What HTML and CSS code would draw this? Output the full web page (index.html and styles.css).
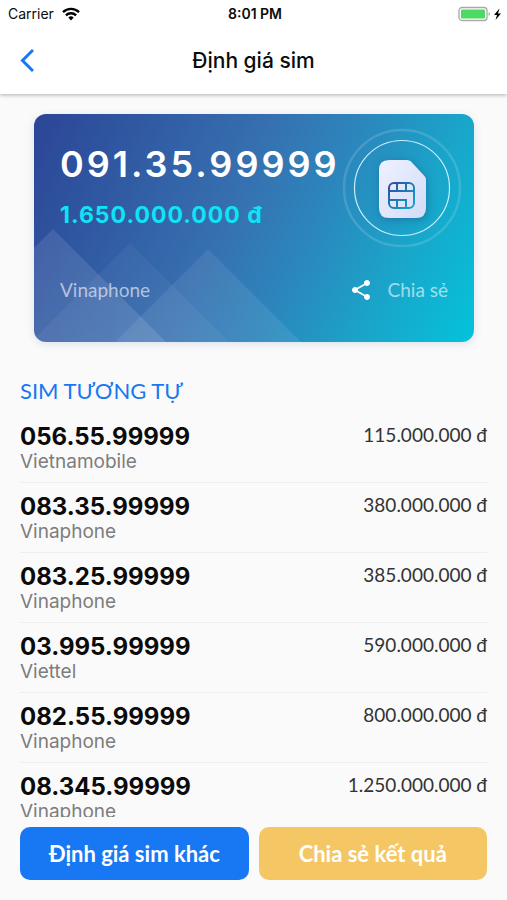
FILE: index.html
```html
<!DOCTYPE html>
<html lang="vi">
<head>
  <meta charset="UTF-8" />
  <meta name="viewport" content="width=device-width, initial-scale=1.0" />
  <title>Định giá sim</title>
  <link rel="stylesheet" href="styles.css">
</head>
<body>

<header class="header">
  <div class="status-bar">
    <div class="status-left">
      <span>Carrier</span>
      <svg width="18" height="14" viewBox="0 0 18 14" fill="none" stroke="#000" stroke-width="2.4">
        <path d="M1 5.2a11.3 11.3 0 0 1 16 0" />
        <path d="M3.9 8.3a7.2 7.2 0 0 1 10.2 0" />
        <path d="M9 13.4l-2.7-2.8a3.8 3.8 0 0 1 5.4 0z" fill="#000" stroke="none" />
      </svg>
    </div>
    <span class="status-time">8:01 PM</span>
    <div class="status-right">
      <svg width="44" height="16" viewBox="0 0 44 16">
        <rect x="1" y="1.5" width="28" height="13" rx="3" fill="#fff" stroke="#a9a9a9" stroke-width="1.3" />
        <rect x="3" y="3.5" width="24" height="9" rx="1" fill="#4cd964" />
        <path d="M30.6 6v4q1.4-.6 1.4-2t-1.4-2z" fill="#a9a9a9" />
        <path d="M41.5 2.5l-5.5 6.5h3l-1.5 5 5.5-6.5h-3z" fill="#000" />
      </svg>
    </div>
  </div>
  <nav class="nav-bar">
    <button class="back-button" aria-label="Quay lại">
      <svg width="16" height="26" viewBox="0 0 16 26" fill="none" stroke="#1877f2" stroke-width="3">
        <path d="M15 2L4.500 12.500L15 23" />
      </svg>
    </button>
    <h1>Định giá sim</h1>
  </nav>
</header>

<main class="content">
  <section class="card">
    <svg class="card-shapes" viewBox="0 0 440 228" preserveAspectRatio="xMinYMax slice">
      <defs>
        <linearGradient id="fade" x1="0" y1="0" x2="0" y2="1">
          <stop offset="0" stop-color="#fff" stop-opacity=".1" />
          <stop offset="1" stop-color="#fff" stop-opacity=".12" />
        </linearGradient>
      </defs>
      <path d="M19 115L132 228H-94z" fill="url(#fade)" />
      <path d="M96 129l99 99H-3z" fill="url(#fade)" opacity=".4" />
      <path d="M174 135l93 93H81z" fill="url(#fade)" opacity=".7" />
    </svg>

    <svg class="card-sim" width="120" height="120" viewBox="0 0 120 120" fill="none">
      <defs>
        <linearGradient id="sim" x1="0" y1="0" x2="1" y2="1">
          <stop offset="0" stop-color="#eef1ff" />
          <stop offset="1" stop-color="#d3dcf7" />
        </linearGradient>
        <linearGradient id="chip" x1="46" y1="54" x2="73" y2="81" gradientUnits="userSpaceOnUse">
          <stop offset="0" stop-color="#2f4799" />
          <stop offset="1" stop-color="#12add0" />
        </linearGradient>
      </defs>
      <circle cx="60" cy="60" r="58" stroke="#fff" stroke-opacity=".14" stroke-width="2.5" />
      <circle cx="60" cy="60" r="47.5" stroke="#c8effa" stroke-width="1.2" />
      <path class="sim-body" d="M47 32H65q2.5 0 4 1.5L82.500 48q1.500 1.500 1.500 4V80q0 10-10 10H47q-10 0-10-10V42q0-10 10-10z" fill="url(#sim)" />
      <g stroke="url(#chip)" stroke-width="2">
        <rect x="47" y="55" width="25" height="25" rx="5" />
        <path d="M47 63H72M47 72H64V80M55 55V63M64 55V63M55 72V80" />
      </g>
    </svg>

    <p class="card-number">091.35.99999</p>
    <p class="card-price">1.650.000.000 đ</p>
    <div class="card-footer">
      <span>Vinaphone</span>
      <button class="card-share">
        <svg width="24" height="24" viewBox="0 0 24 24" fill="#fff">
          <path d="M18 16.080c-.76 0-1.440.3-1.960.77L8.910 12.700c.05-.23.09-.46.09-.7s-.04-.47-.09-.7l7.050-4.110c.54.5 1.250.81 2.040.81 1.660 0 3-1.340 3-3s-1.340-3-3-3-3 1.340-3 3c0 .24.04.47.09.7L8.040 9.810C7.500 9.310 6.790 9 6 9c-1.660 0-3 1.340-3 3s1.340 3 3 3c.79 0 1.500-.31 2.040-.81l7.120 4.160c-.05.21-.08.43-.08.65 0 1.610 1.310 2.920 2.920 2.920s2.920-1.310 2.920-2.920-1.310-2.920-2.920-2.920z" />
        </svg>
        Chia sẻ
      </button>
    </div>
  </section>

  <h2>SIM TƯƠNG TỰ</h2>

  <ul class="sim-list">
    <li>
      <div>
        <p class="sim-number">056.55.99999</p>
        <p class="sim-network">Vietnamobile</p>
      </div>
      <span class="sim-price">115.000.000 đ</span>
    </li>
    <li>
      <div>
        <p class="sim-number">083.35.99999</p>
        <p class="sim-network">Vinaphone</p>
      </div>
      <span class="sim-price">380.000.000 đ</span>
    </li>
    <li>
      <div>
        <p class="sim-number">083.25.99999</p>
        <p class="sim-network">Vinaphone</p>
      </div>
      <span class="sim-price">385.000.000 đ</span>
    </li>
    <li>
      <div>
        <p class="sim-number">03.995.99999</p>
        <p class="sim-network">Viettel</p>
      </div>
      <span class="sim-price">590.000.000 đ</span>
    </li>
    <li>
      <div>
        <p class="sim-number">082.55.99999</p>
        <p class="sim-network">Vinaphone</p>
      </div>
      <span class="sim-price">800.000.000 đ</span>
    </li>
    <li>
      <div>
        <p class="sim-number">08.345.99999</p>
        <p class="sim-network">Vinaphone</p>
      </div>
      <span class="sim-price">1.250.000.000 đ</span>
    </li>
  </ul>
</main>

<footer class="actions">
  <button class="action-button">Định giá sim khác</button>
  <button class="action-button share">Chia sẻ kết quả</button>
</footer>

</body>
</html>
```
FILE: styles.css
```css
* {
  box-sizing: border-box;
}

body {
  font-family: Inter, "Liberation Sans", sans-serif;
  background-color: #fafafa;
  color: #0b0b0b;
  margin: 0;
  height: 100vh;
  display: flex;
  flex-direction: column;
}

h1, h2, p, ul {
  margin: 0;
  padding: 0;
}

button {
  font-family: Lato, "Noto Sans", sans-serif;
  border: none;
  padding: 0;
  background: none;
  cursor: pointer;
}

svg {
  display: block;
}

/* Header */
.header {
  background-color: #fff;
  box-shadow: 0 1px 4px rgba(0, 0, 0, 0.3);
  position: relative;
}

.status-bar {
  display: grid;
  grid-template-columns: 1fr auto 1fr;
  align-items: center;
  height: 27px;
  padding: 0 5px 0 8px;
  font-size: 14px;
}

.status-left {
  display: flex;
  align-items: center;
  gap: 8px;
}

.status-time {
  font-weight: 600;
}

.status-right {
  justify-self: end;
}

.nav-bar {
  display: grid;
  grid-template-columns: 40px 1fr 40px;
  align-items: center;
  height: 67px;
  padding: 0 18px;
}

.back-button {
  justify-self: start;
}

.nav-bar h1 {
  font-size: 21px;
  font-weight: 500;
  text-align: center;
}

/* Content */
.content {
  flex: 1;
  min-height: 0;
  overflow-y: auto;
  scrollbar-width: none;
  padding: 20px 20px 0;
}

.card {
  position: relative;
  overflow: hidden;
  margin: 0 13px 0 14px;
  padding: 28px 26px 40px;
  border-radius: 12px;
  background: linear-gradient(115deg, #2b4596 0%, #3670b0 44%, #2c85bc 60%, #1ba3c9 78%, #04c3da 100%);
  box-shadow: 0 2px 8px rgba(40, 80, 160, 0.15);
  color: #fff;
}

.card-shapes {
  position: absolute;
  inset: 0;
  width: 100%;
  height: 100%;
}

.card-sim {
  position: absolute;
  top: 14px;
  right: 12px;
}

.sim-body {
  filter: drop-shadow(1px 2px 4px rgba(20, 60, 120, 0.4));
}

.card-number,
.card-price,
.card-footer {
  position: relative;
}

.card-number {
  font-size: 36px;
  font-weight: 600;
  line-height: 44px;
  letter-spacing: 3px;
}

.card-price {
  margin-top: 14px;
  font-size: 23px;
  font-weight: 700;
  line-height: 30px;
  letter-spacing: 1px;
  color: #0fe3f5;
}

.card-footer {
  display: flex;
  justify-content: space-between;
  align-items: center;
  margin-top: 48px;
  font-family: Lato, "Noto Sans", sans-serif;
  font-size: 19px;
  line-height: 24px;
  color: rgba(255, 255, 255, 0.6);
}

.card-share {
  display: flex;
  align-items: center;
  gap: 15px;
  font-size: 19px;
  line-height: 24px;
  color: rgba(255, 255, 255, 0.6);
}

.content h2 {
  margin-top: 34px;
  font-family: Lato, "Noto Sans", sans-serif;
  font-size: 22px;
  font-weight: 400;
  line-height: 30px;
  color: #1877f2;
}

.sim-list {
  list-style: none;
  margin-top: 7px;
}

.sim-list li {
  display: flex;
  justify-content: space-between;
  align-items: flex-start;
  height: 70px;
  padding-top: 10px;
  border-bottom: 1px solid #eee;
}

.sim-number {
  font-size: 24px;
  font-weight: 700;
  line-height: 28px;
}

.sim-network {
  font-size: 19px;
  line-height: 22px;
  color: #7d7d7d;
}

.sim-price {
  font-family: Lato, "Noto Sans", sans-serif;
  font-size: 19px;
  line-height: 24px;
  color: #333;
}

/* Bottom buttons */
.actions {
  display: grid;
  grid-template-columns: 1fr 1fr;
  gap: 10px;
  padding: 10px 20px 20px;
}

.action-button {
  height: 53px;
  border-radius: 10px;
  background-color: #1877f2;
  color: #fff;
  font-size: 22px;
  font-weight: 700;
}

.action-button.share {
  background-color: #f5c764;
}
```
